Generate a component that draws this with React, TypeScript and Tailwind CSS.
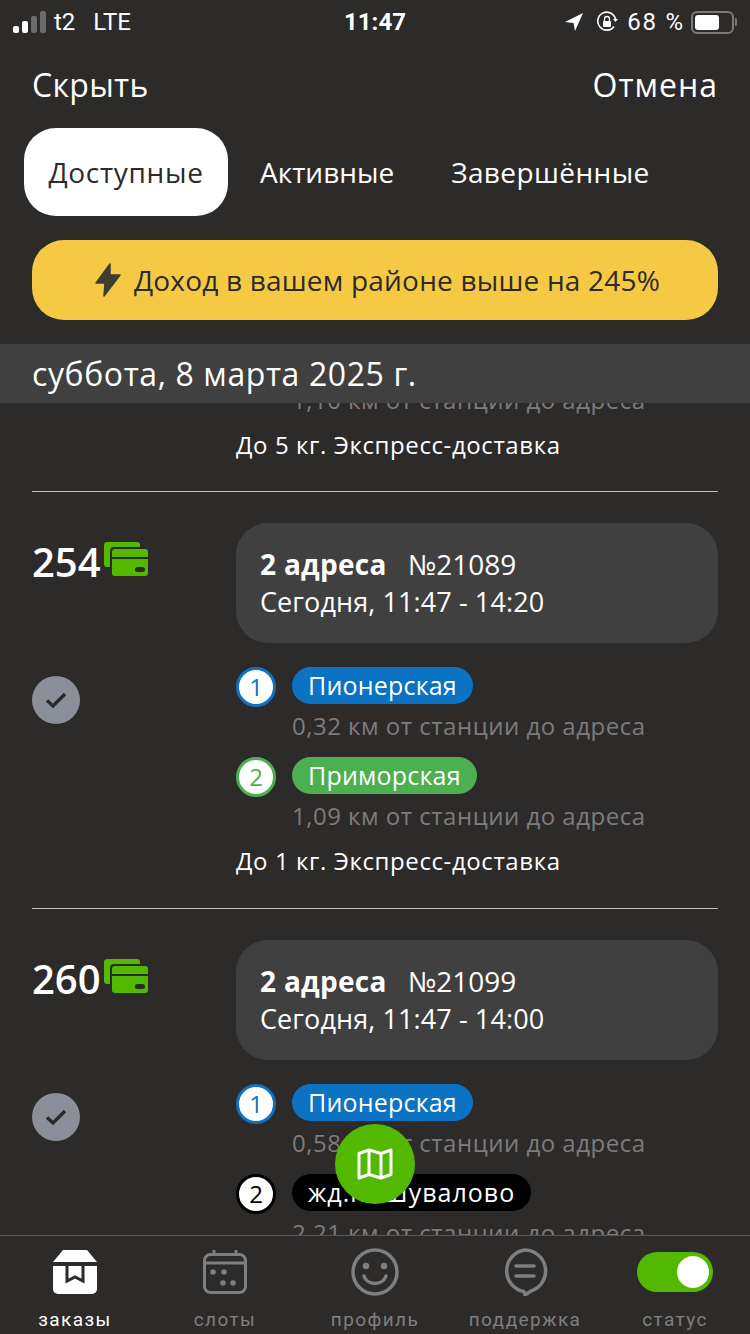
import type { ReactNode } from "react";

const font = "font-['Open_Sans','Noto_Sans',sans-serif]";

type StopData = { n: number; ring: string; pill: string; station: string; dist: string };

function SignalBars() {
  return (
    <div className="flex items-end gap-[3px] h-[22px]">
      <div className="w-[6px] h-[7px] rounded-[2px] bg-white" />
      <div className="w-[6px] h-[12px] rounded-[2px] bg-white" />
      <div className="w-[6px] h-[17px] rounded-[2px] bg-[#6b6b6b]" />
      <div className="w-[6px] h-[22px] rounded-[2px] bg-[#6b6b6b]" />
    </div>
  );
}

function StatusBar() {
  return (
    <div className="h-[44px] shrink-0 relative flex items-center justify-between pl-[13px] pr-[13px] text-white font-['Roboto',sans-serif] text-[24px]">
      <div className="flex items-center">
        <SignalBars />
        <span className="ml-[8px]">t2</span>
        <span className="ml-[18px]">LTE</span>
      </div>
      <div className="absolute left-0 right-0 text-center font-bold text-[24px]">11:47</div>
      <div className="flex items-center">
        <svg width="20" height="20" viewBox="0 0 20 20" className="mr-[12px]">
          <path d="M19 1 L1 10 L9.500 11 L11 19 Z" fill="#fff" />
        </svg>
        <svg width="22" height="22" viewBox="0 0 22 22" className="mr-[9px]" fill="none">
          <path d="M18 15.500A9 9 0 1 1 19.500 8" stroke="#fff" strokeWidth="1.600" />
          <path d="M17 8h5l-2.500 3z" fill="#fff" />
          <rect x="7" y="10" width="8" height="6" rx="1" fill="#fff" />
          <path d="M8.500 10V8a2.500 2.500 0 0 1 5 0v2" stroke="#fff" strokeWidth="1.300" />
        </svg>
        <span className="mr-[6px] tracking-[1.800px]">68 %</span>
        <div className="w-[43px] h-[23px] rounded-[6px] border-2 border-[#7a7a7a] p-[2px]">
          <div className="w-[24px] h-full rounded-[3px] bg-white" />
        </div>
        <div className="w-[2px] h-[8px] rounded-r bg-[#7a7a7a] ml-[1px]" />
      </div>
    </div>
  );
}

function CardsIcon() {
  return (
    <svg width="44" height="34" viewBox="0 0 44 34" className="ml-[3px] mt-[-6px]">
      <path d="M3 0h30a3 3 0 0 1 3 3v2H10a4 4 0 0 0-4 4v16H3a3 3 0 0 1-3-3V3a3 3 0 0 1 3-3z" fill="#52b900" />
      <path d="M8 10a3 3 0 0 1 3-3h30a3 3 0 0 1 3 3v5H8z" fill="#52b900" />
      <path d="M8 17h36v14a3 3 0 0 1-3 3H11a3 3 0 0 1-3-3z" fill="#52b900" />
      <rect x="31" y="25" width="10" height="5" rx="2.500" fill="#2d2a2a" />
    </svg>
  );
}

function Stop({ n, ring, pill, station, dist }: StopData) {
  return (
    <div className="flex gap-[16px]">
      <div className={`w-[40px] h-[40px] rounded-full border-[3px] bg-white flex items-center justify-center text-[24px] shrink-0 ${ring}`}>
        {n}
      </div>
      <div>
        <div className={`inline-block h-[37px] leading-[36px] rounded-full px-[16px] text-white text-[25px] ${pill}`}>
          {station}
        </div>
        <div className="text-[#7d7b7b] text-[24px] tracking-[.5px] leading-[30px] mt-[7px]">{dist}</div>
      </div>
    </div>
  );
}

function OrderRow({ price, num, time, stops, note }: { price: number; num: number; time: string; stops: StopData[]; note?: string }) {
  return (
    <div className={`mx-[32px] pt-[31px] flex ${note ? "pb-[32px] border-b border-[#bdbdbd]" : ""}`}>
      <div className="w-[204px] shrink-0 flex flex-col">
        <div className="flex items-center h-[60px] mt-[9px] text-white text-[40px] font-semibold">
          {price}
          <CardsIcon />
        </div>
        <div className="w-[48px] h-[48px] mt-[84px] rounded-full bg-[#8a8f99] flex items-center justify-center">
          <svg width="22" height="18" viewBox="0 0 22 18" fill="none">
            <path d="M2 9.500 L8 15 L20 3" stroke="#2d2a2a" strokeWidth="3.400" />
          </svg>
        </div>
      </div>
      <div className="flex-1">
        <div className="h-[120px] rounded-[32px] bg-[#404040] px-[24px] flex flex-col justify-center text-white text-[27px] leading-[38px]">
          <div className="flex items-baseline">
            <span className="font-bold text-[28px] tracking-[.3px]">2 адреса</span>
            <span className="ml-[21px] text-[28px]">№{num}</span>
          </div>
          <div className="tracking-[.1px]">{time}</div>
        </div>
        <div className="mt-[24px] flex flex-col gap-[16px]">
          {stops.map((s) => (
            <Stop key={s.n} {...s} />
          ))}
        </div>
        {note && <div className="mt-[15px] text-white text-[24px] tracking-[.6px] leading-[30px]">{note}</div>}
      </div>
    </div>
  );
}

const blueRing = "border-[#0b72c4] text-[#0b72c4]";
const greenRing = "border-[#4caf50] text-[#4caf50]";
const bluePill = "bg-[#0b72c4] tracking-[.2px]";
const greenPill = "bg-[#4caf50] tracking-[.2px]";

function TabItem({ label, active, children }: { label: string; active?: boolean; children: ReactNode }) {
  return (
    <div className="flex-1 flex flex-col items-center">
      <div className="h-[60px] flex items-center justify-center">{children}</div>
      <div className={`mt-[5px] text-[19px] tracking-[1.400px] font-['Roboto',sans-serif] ${active ? "text-white" : "text-[#7f7f7f]"}`}>{label}</div>
    </div>
  );
}

export default function App() {
  return (
    <div className={`w-[750px] h-[1334px] bg-[#2d2a2a] overflow-hidden relative flex flex-col ${font}`}>
      <StatusBar />

      <div className="shrink-0 flex justify-between px-[32px] pt-[21px] text-white text-[32px] tracking-[.3px] leading-[40px]">
        <span>Скрыть</span>
        <span className="tracking-[1px]">Отмена</span>
      </div>

      <div className="shrink-0 flex items-center mt-[23px] pl-[24px] text-[28px]">
        <div className="h-[88px] w-[204px] rounded-[32px] bg-white text-[#2d2a2a] tracking-[.7px] flex items-center justify-center">Доступные</div>
        <div className="ml-[32px] text-white">Активные</div>
        <div className="ml-[57px] text-white tracking-[.4px]">Завершённые</div>
      </div>

      <div className="shrink-0 mx-[32px] mt-[24px] pl-[5px] h-[80px] rounded-[32px] bg-[#f6c945] flex items-center justify-center gap-[13px] text-[#2d2a2a] text-[28px] tracking-[.2px]">
        <svg width="26" height="34" viewBox="0 0 26 34" fill="#3f3c30">
          <path d="M15 1 L1 20 H10 L9 33 L25 12 H15 Z" stroke="#3f3c30" strokeWidth="1.500" strokeLinejoin="round" />
        </svg>
        Доход в вашем районе выше на 245%
      </div>

      <div className="shrink-0 mt-[24px] h-[59px] bg-[#404040] px-[32px] flex items-center text-white text-[32px] tracking-[.6px] z-10">
        суббота, 8 марта 2025 г.
      </div>

      <div className="flex-1 min-h-0 overflow-hidden">
        <div className="mt-[-18px] mx-[32px] pl-[204px] pb-[31px] border-b border-[#bdbdbd]">
          <div className="pl-[56px] text-[#7d7b7b] text-[24px] tracking-[.5px] leading-[30px]">1,10 км от станции до адреса</div>
          <div className="mt-[15px] text-white text-[24px] tracking-[.6px] leading-[30px]">До 5 кг. Экспресс-доставка</div>
        </div>
        <OrderRow
          price={254}
          num={21089}
          time="Сегодня, 11:47 - 14:20"
          stops={[
            { n: 1, ring: blueRing, pill: bluePill, station: "Пионерская", dist: "0,32 км от станции до адреса" },
            { n: 2, ring: greenRing, pill: greenPill, station: "Приморская", dist: "1,09 км от станции до адреса" },
          ]}
          note="До 1 кг. Экспресс-доставка"
        />
        <OrderRow
          price={260}
          num={21099}
          time="Сегодня, 11:47 - 14:00"
          stops={[
            { n: 1, ring: blueRing, pill: bluePill, station: "Пионерская", dist: "0,58 км от станции до адреса" },
            { n: 2, ring: "border-black text-black", pill: "bg-black tracking-[1px]", station: "жд.п. Шувалово", dist: "2,21 км от станции до адреса" },
          ]}
        />
      </div>

      <div className="absolute left-[335px] top-[1124px] w-[80px] h-[80px] rounded-full bg-[#52b900] flex items-center justify-center">
        <svg width="36" height="32" viewBox="0 0 36 32" fill="none" stroke="#fff" strokeWidth="3" strokeLinejoin="round">
          <path d="M2 5.500L12 2l12 3.500L34 2v24.500L24 30l-12-3.500L2 30z" />
          <path d="M12 2v24.500M24 5.500V30" />
        </svg>
      </div>

      <div className="shrink-0 h-[99px] border-t border-[#555] bg-[#2d2a2a] flex pt-[8px] z-10">
        <TabItem label="заказы" active>
          <svg width="46" height="44" viewBox="0 0 46 44">
            <path d="M12 0h22a2 2 0 0 1 2 1.200L45 12H1L10 1.200A2 2 0 0 1 12 0z" fill="#fff" />
            <path d="M1 16h44v23a5 5 0 0 1-5 5H6a5 5 0 0 1-5-5z" fill="#fff" />
            <path d="M15 16v15l8-4 8 4V16" fill="none" stroke="#2d2a2a" strokeWidth="3" />
          </svg>
        </TabItem>
        <TabItem label="слоты">
          <svg width="44" height="44" viewBox="0 0 44 44" fill="none" stroke="#7f7f7f" strokeWidth="3">
            <rect x="1.500" y="4.500" width="41" height="38" rx="6" />
            <path d="M1.500 13h41M11 0v5M33 0v5" />
            <g fill="#7f7f7f" stroke="none">
              <circle cx="10" cy="22" r="2.800" />
              <circle cx="21" cy="22" r="2.800" />
              <circle cx="20" cy="33" r="2.800" />
              <circle cx="30" cy="33" r="2.800" />
            </g>
          </svg>
        </TabItem>
        <TabItem label="профиль">
          <svg width="48" height="48" viewBox="0 0 48 48" fill="none" stroke="#7f7f7f" strokeWidth="3.500">
            <circle cx="24" cy="24" r="22" />
            <path d="M13 28c3 10 19 10 22 0" strokeLinecap="round" />
            <circle cx="15" cy="18" r="1.500" fill="#7f7f7f" />
            <circle cx="33" cy="18" r="1.500" fill="#7f7f7f" />
          </svg>
        </TabItem>
        <TabItem label="поддержка">
          <svg width="48" height="48" viewBox="0 0 48 48" fill="none" stroke="#7f7f7f" strokeWidth="3.500">
            <path d="M24 2a21 21 0 0 1 6 41L24 47l-1-3.500A21 21 0 0 1 24 2z" strokeLinejoin="round" />
            <path d="M15 18h18M15 28h18" strokeLinecap="round" />
          </svg>
        </TabItem>
        <TabItem label="статус">
          <div className="w-[76px] h-[40px] rounded-full bg-[#52b900] flex items-center justify-end pr-[4px]">
            <div className="w-[32px] h-[32px] rounded-full bg-white" />
          </div>
        </TabItem>
      </div>
    </div>
  );
}
